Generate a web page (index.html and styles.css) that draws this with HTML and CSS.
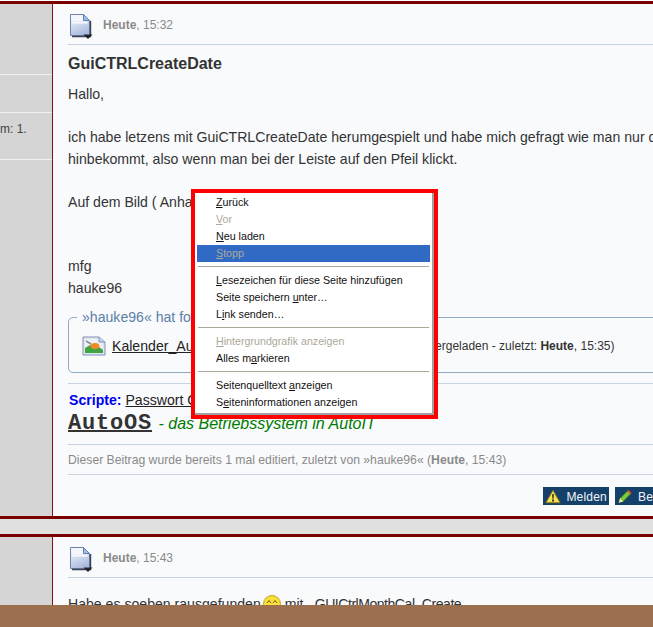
FILE: index.html
```html
<!DOCTYPE html>
<html lang="de">
<head>
<meta charset="utf-8">
<title>GuiCTRLCreateDate</title>
<link rel="stylesheet" href="styles.css">
</head>
<body>
<svg class="defs" width="0" height="0" aria-hidden="true">
  <defs>
    <linearGradient id="docfill" x1="0" y1="0" x2="0.6" y2="1"><stop offset="0" stop-color="#e8edf7"/><stop offset="1" stop-color="#a9b9de"/></linearGradient>
    <symbol id="doc" viewBox="0 0 24 26">
      <path d="M1.500 1.500H14.500L20.500 7.500V22.500H1.500Z" fill="#f4f6fb" stroke="#6f82ab"/>
      <path d="M2 8H20V22H2Z" fill="url(#docfill)"/>
      <path d="M3.500 8.500H18.500V10.500H3.500Z" fill="#f6f8fc"/>
      <path d="M14.500 1.500V7.500H20.500Z" fill="#9cc0e6" stroke="#5f7fb0"/>
      <path d="M21.500 8V23.500H3" fill="none" stroke="#3b4252" stroke-width="1.400"/>
      <path d="M14.500 21.500H23.500L19 26Z" fill="#222"/>
    </symbol>
  </defs>
</svg>
<div class="page">
  <article class="post">
    <aside class="side">
      <div class="cell cell-a"><span class="frag">s</span></div>
      <div class="cell cell-b"></div>
      <div class="cell cell-c"><span class="side-text">m: 1.</span></div>
      <div class="cell"></div>
    </aside>
    <div class="main">
      <header class="head">
        <svg class="doc" width="24" height="26"><use href="#doc"/></svg>
        <span class="date"><b>Heute</b>, 15:32</span>
      </header>
      <h2 class="title">GuiCTRLCreateDate</h2>
      <div class="body">Hallo,<br><br>ich habe letzens mit GuiCTRLCreateDate herumgespielt und habe mich gefragt wie man nur das Datum<br>hinbekommt, also wenn man bei der Leiste auf den Pfeil klickt.<br><br>Auf dem Bild ( Anhang ) sieht man was ich meine.<br><br><br>mfg<br>hauke96</div>
      <fieldset class="attach">
        <legend class="attach-legend">»hauke96« hat folgende Datei angehängt:</legend>
        <div class="attach-row">
          <svg class="pic" width="24" height="20" viewBox="0 0 24 20">
            <path d="M1 1H17L23 6V19H1Z" fill="#dfe6f1" stroke="#7f93b5"/>
            <path d="M3 3H16L20 7V17H3Z" fill="#eef2f8"/>
            <path d="M3 17V12L8 9L13 13L17 11L21 14V17Z" fill="#3fa33f"/>
            <ellipse cx="13" cy="10" rx="4.500" ry="3" fill="#f08a24"/>
            <path d="M4 5L9 8" stroke="#8c8c8c" stroke-width="1.500"/>
            <path d="M17 1V6H23" fill="#c4d4ea" stroke="#7f93b5"/>
          </svg>
          <a class="file" href="#">Kalender_AutoIt_Datum.png</a>
          <span class="meta">(115,42 kB, 12 mal heruntergeladen - zuletzt: <b>Heute</b>, 15:35)</span>
        </div>
      </fieldset>
      <div class="sig">
        <div class="sig-line"><b class="sig-label">Scripte:</b> <a class="file" href="#">Passwort Generator</a></div>
        <div class="sig-os"><a class="os" href="#">AutoOS</a><i class="os-text"> - das Betriebssystem in AutoIT</i></div>
      </div>
      <div class="edited">Dieser Beitrag wurde bereits 1 mal editiert, zuletzt von »hauke96« (<b>Heute</b>, 15:43)</div>
      <div class="actions">
        <a class="btn" href="#">
          <svg width="16" height="15" viewBox="0 0 18 16"><path d="M9 1L17 15H1Z" fill="#f5e050" stroke="#8a7414"/><path d="M8 5.500H10L9.600 10.500H8.400ZM8 11.500H10V13.500H8Z" fill="#222"/></svg>
          <span class="btn-text">Melden</span>
        </a>
        <a class="btn" href="#">
          <svg width="16" height="15" viewBox="0 0 18 16"><path d="M2 15L3.500 10L12 1.500L15.500 5L7 13.500Z" fill="#7ccb3c" stroke="#2f6d1c"/><path d="M11.500 2L13 .5L16.500 4L15 5.500Z" fill="#d9483b"/><path d="M2 15L3.500 10L7 13.500Z" fill="#f2e3c0"/></svg>
          <span class="btn-text">Bearbeiten</span>
        </a>
      </div>
    </div>
  </article>
  <div class="gap"></div>
  <article class="post">
    <aside class="side">
      <div class="cell"><span class="frag frag-2">s</span></div>
    </aside>
    <div class="main">
      <header class="head">
        <svg class="doc" width="24" height="26"><use href="#doc"/></svg>
        <span class="date"><b>Heute</b>, 15:43</span>
      </header>
      <div class="body body-2">Habe es soeben rausgefunden<svg class="smile" width="18" height="18" viewBox="0 0 18 18"><circle cx="9" cy="9" r="8.500" fill="#f7df3c" stroke="#c9a61a"/><path d="M4 8L6 5.500L8 8M10 8L12 5.500L14 8" fill="none" stroke="#7a5a10"/></svg> mit <span class="code">_GUICtrlMonthCal_Create</span></div>
    </div>
  </article>
</div>
<div class="footer"></div>
<div class="menu">
  <ul class="menu-list">
    <li class="item"><u>Z</u>urück</li>
    <li class="item off"><u>V</u>or</li>
    <li class="item"><u>N</u>eu laden</li>
    <li class="item off active"><u>S</u>topp</li>
    <li class="sep"></li>
    <li class="item"><u>L</u>esezeichen für diese Seite hinzufügen</li>
    <li class="item">Seite speichern <u>u</u>nter…</li>
    <li class="item">L<u>i</u>nk senden…</li>
    <li class="sep"></li>
    <li class="item off"><u>H</u>intergrundgrafik anzeigen</li>
    <li class="item">Alles m<u>a</u>rkieren</li>
    <li class="sep"></li>
    <li class="item">Seitenquelltext <u>a</u>nzeigen</li>
    <li class="item">S<u>e</u>iteninformationen anzeigen</li>
  </ul>
</div>
</body>
</html>
```
FILE: styles.css
```css
html, body {
  margin: 0;
  height: 627px;
  overflow: hidden;
  background: #e0e0e0;
}
body {
  position: relative;
  font-family: "Liberation Sans", Arial, sans-serif;
  color: #333;
}
.defs { position: absolute; }
.page {
  width: 715px;
  padding-top: 1px;
  background: linear-gradient(#fff 1px, transparent 1px);
}
.post {
  display: flex;
  border-top: 3px solid #7a0000;
  border-bottom: 3px solid #7a0000;
  background: #f9fafc;
}
.side {
  width: 52px;
  flex: none;
  background: #d5d5d5;
  border-right: 1px solid #8e0f0f;
  overflow: hidden;
}
.cell { border-bottom: 1px solid #f2f2f2; position: relative; }
.cell:last-child { border-bottom: 0; }
.cell-a { height: 70px; }
.cell-b { height: 37px; }
.cell-c { height: 46px; }
.frag {
  display: block;
  margin-left: -6px;
  padding-top: 11px;
  font-size: 12px;
  color: #3e9be0;
}
.side-text {
  display: block;
  padding-top: 9px;
  font-size: 12px;
  color: #444;
}
.main {
  flex: 1;
  min-width: 0;
  padding: 0 15px;
}
.head {
  height: 40px;
  display: flex;
  align-items: center;
  border-bottom: 1px solid #c5d3e2;
}
.doc { flex: none; margin: 3px 0 0 1px; }
.date {
  margin: 2px 0 0 10px;
  font-size: 12px;
  color: #8a8a8a;
}
.title {
  margin: 10px 0 0;
  font-size: 16px;
  line-height: 18px;
  font-weight: bold;
  color: #333;
}
.body {
  margin-top: 11px;
  font-size: 14.100px;
  line-height: 21.500px;
  white-space: nowrap;
  color: #333;
}
.body-2 { margin-top: 16px; }
.smile { vertical-align: -4px; margin-left: 2px; }
.code { letter-spacing: -0.500px; }
.attach {
  margin: 10px 0 0;
  padding: 0 0 0 13px;
  height: 64px;
  box-sizing: border-box;
  border: 1px solid #8fa9c4;
  border-radius: 5px;
  min-width: 0;
}
.attach-legend {
  margin-left: -5px;
  padding: 0 0 0 5px;
  font-size: 14.100px;
  line-height: 16px;
  color: #5a80a8;
}
.attach-row {
  display: flex;
  align-items: center;
  height: 22px;
  margin-top: 10px;
  white-space: nowrap;
}
.pic { flex: none; }
.file { color: #222; font-size: 14.100px; }
.attach-row .file { margin-left: 6px; }
.meta { margin-left: 8px; font-size: 12px; color: #333; }
.sig {
  margin-top: 10px;
  border-top: 1px solid #c5d3e2;
  height: 60px;
  white-space: nowrap;
}
.sig-line { padding: 8px 0 0 1px; font-size: 14.100px; line-height: 17px; }
.sig-label { color: #0000f0; }
.sig-os { margin-top: 2px; line-height: 26px; }
.os {
  font-family: "Liberation Mono", monospace;
  font-weight: bold;
  font-size: 22px;
  letter-spacing: 0.800px;
  color: #333;
  text-decoration-thickness: 2px;
}
.os-text { margin-left: 2px; font-size: 16px; color: #007a00; }
.edited {
  border-top: 1px solid #c5d3e2;
  border-bottom: 1px solid #c5d3e2;
  height: 29px;
  font-size: 12.200px;
  line-height: 30px;
  color: #8a8a8a;
  white-space: nowrap;
}
.actions {
  display: flex;
  justify-content: flex-end;
  gap: 6px;
  padding: 12px 0 11px;
}
.btn {
  display: flex;
  align-items: center;
  gap: 5px;
  height: 18px;
  padding: 0 2px;
  background: #14406a;
  color: #f2f6fa;
  font-size: 12px;
  text-decoration: none;
}
.btn-text { margin-top: 1px; letter-spacing: 0.200px; }
.gap { height: 15px; background: #e0e0e0; }
.footer {
  position: absolute;
  left: 0;
  right: 0;
  top: 605px;
  height: 22px;
  background: #9c6f4e;
}
.menu {
  position: absolute;
  left: 191px;
  top: 189px;
  width: 247px;
  height: 230px;
  box-sizing: border-box;
  border: 4px solid #f00;
  background: #fff;
}
.menu-list {
  list-style: none;
  margin: 0;
  padding: 1px 2px 0;
  height: 100%;
  box-sizing: border-box;
  border-right: 2px solid #a0a0a0;
  border-bottom: 2px solid #a0a0a0;
}
.item {
  height: 17px;
  padding-left: 19px;
  font-size: 10.700px;
  line-height: 17px;
  color: #111;
}
.off { color: #aca899; }
.active { background: #316ac5; }
.sep {
  height: 1px;
  margin: 4px 1px 5px;
  background: #aca899;
}
```
